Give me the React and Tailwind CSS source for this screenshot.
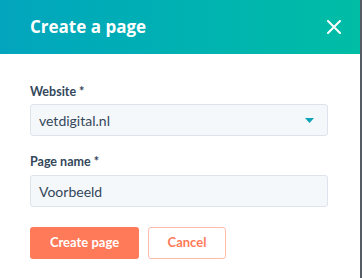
export default function App() {
  return (
    <div className="w-[362px] h-[278px] bg-white flex flex-col border-r-2 border-r-[#565c63] overflow-hidden" style={{ fontFamily: 'Lato, "Open Sans", "Liberation Sans", sans-serif' }}>
      <div className="h-[54px] shrink-0 flex items-center justify-between pl-[30px] pr-[19px] bg-gradient-to-r from-[#03a5be] to-[#00bda5]">
        <h1 className="text-[17px] font-bold text-white leading-[20px]" style={{ fontFamily: '"Open Sans", sans-serif' }}>Create a page</h1>
        <svg width="14" height="14" viewBox="0 0 14 14">
          <path d="M1 1 L13 13 M13 1 L1 13" stroke="white" strokeWidth="2" strokeLinecap="round" />
        </svg>
      </div>
      <div className="flex flex-col pl-[30px] pr-[32px] pt-[30px]">
        <label className="text-[12.5px] font-bold text-[#33475b] leading-[16px]">Website *</label>
        <div className="mt-[4px] h-[32px] flex items-center justify-between rounded-[3px] border border-[#dfe3eb] bg-[#f5f8fa] pl-[8px] pr-[13px]">
          <span className="text-[14px] text-[#33475b]">vetdigital.nl</span>
          <svg width="9" height="5" viewBox="0 0 9 5">
            <path d="M0 0 L9 0 L4.5 5 Z" fill="#0fa3b8" />
          </svg>
        </div>
        <label className="mt-[18px] text-[12.5px] font-bold text-[#33475b] leading-[16px]">Page name *</label>
        <div className="mt-[5px] h-[32px] flex items-center rounded-[3px] border border-[#dfe3eb] bg-[#f5f8fa] pl-[8px]">
          <span className="text-[14px] text-[#33475b]">Voorbeeld</span>
        </div>
        <div className="mt-[20px] flex gap-[9px]">
          <button className="h-[32px] w-[109px] rounded-[3px] bg-[#ff7a59] text-white text-[13px] font-bold">Create page</button>
          <button className="h-[32px] w-[78px] rounded-[3px] border border-[#ffbca9] bg-white text-[#ff7a59] text-[13px] font-bold">Cancel</button>
        </div>
      </div>
    </div>
  );
}
